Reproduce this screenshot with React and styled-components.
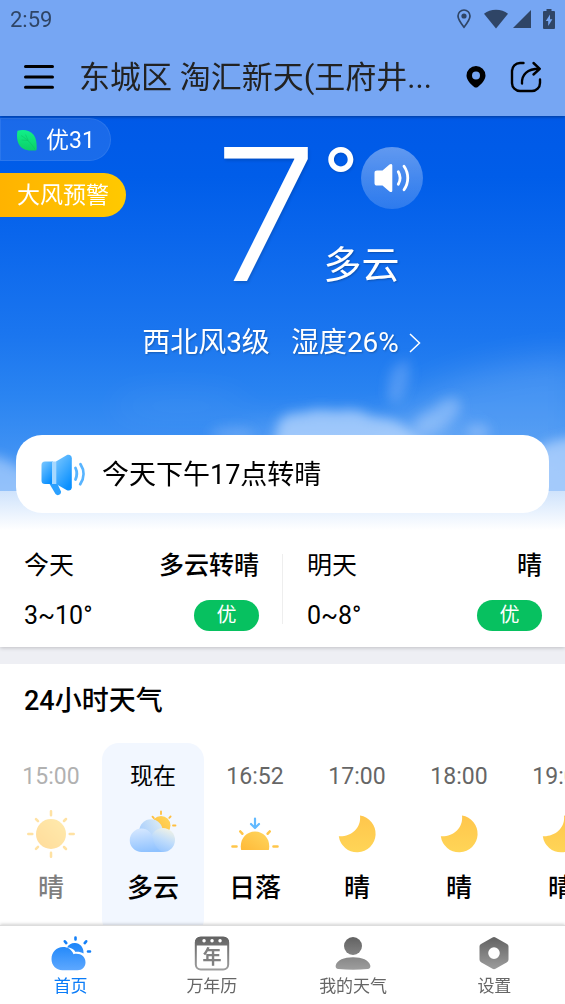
import React, { useState } from 'react'
import styled, { createGlobalStyle } from 'styled-components'

const GlobalStyle = createGlobalStyle`
  * {
    box-sizing: border-box;
  }
  body {
    margin: 0;
    background: #eeeff4;
    color: #000000;
    font-family: Roboto, "Noto Sans CJK SC", sans-serif;
  }
  button {
    border: none;
    padding: 0;
    background: none;
    color: inherit;
    font: inherit;
    cursor: pointer;
  }
  h1, h2, p, ul {
    margin: 0;
    padding: 0;
    font-weight: 400;
  }
  ul {
    list-style: none;
  }
  svg {
    display: block;
    flex-shrink: 0;
  }
`;

const Page = styled.div`
  display: flex;
  flex-direction: column;
  height: 100vh;
`;

const Header = styled.header`
  position: relative;
  z-index: 1;
  background: #76a6f3;
  box-shadow: 0 1px 3px rgba(0, 0, 0, 0.35);
`;

const StatusBar = styled.div`
  display: flex;
  align-items: center;
  justify-content: space-between;
  height: 38px;
  padding: 0 10px;
  color: #2f4566;
  font-size: 22px;
`;

const StatusIcons = styled.div`
  display: flex;
  align-items: center;
`;

const NetworkIcons = styled.div`
  display: flex;
  align-items: center;
  gap: 5px;
  margin: 0 12px 0 13px;
`;

const TitleBar = styled.div`
  display: flex;
  align-items: center;
  height: 78px;
  padding: 0 23px 0 22px;
`;

const IconButton = styled.button`
  display: flex;
  align-items: center;
  justify-content: center;
  flex-shrink: 0;
  width: ${props => props.$width || 32}px;
  height: 40px;
`;

const CityName = styled.h1`
  flex: 1;
  min-width: 0;
  margin: 0 17px 0 25px;
  padding-top: 2px;
  overflow: hidden;
  white-space: nowrap;
  color: #222222;
  font-size: 31px;
  line-height: 40px;
`;

const HeaderActions = styled.div`
  display: flex;
  align-items: center;
  gap: 24px;
`;

const Content = styled.main`
  flex: 1;
  min-height: 0;
  overflow-y: auto;
  scrollbar-width: none;
`;

const Hero = styled.section`
  position: relative;
  isolation: isolate;
  padding-bottom: 17px;
  background: linear-gradient(
    180deg,
    #0059e7 0,
    #005de9 60px,
    #0a66ec 120px,
    #1b76ef 220px,
    #2a84f1 280px,
    #3d90f3 330px,
    #58a0f5 375px,
    #cfe3fc 375px,
    #ffffff 414px
  );
  color: #ffffff;
`;

const Clouds = styled.svg`
  position: absolute;
  z-index: -1;
  top: 0;
  left: 0;
  width: 100%;
  height: 375px;
`;

const Summary = styled.div`
  display: grid;
  grid-template-columns: 8fr auto 9fr;
  align-items: start;
`;

const Badges = styled.div`
  display: flex;
  flex-direction: column;
  align-items: flex-start;
  gap: 12px;
  padding-top: 2px;
`;

const Badge = styled.button`
  display: flex;
  align-items: center;
  gap: 8px;
  height: ${props => props.$warning ? 44 : 43}px;
  padding: 2px ${props => props.$warning ? 17 : 16}px 0;
  border-radius: 0 22px 22px 0;
  background: ${props => props.$warning ? 'linear-gradient(90deg, #ffb300, #ffc900)' : 'rgba(255, 255, 255, 0.1)'};
  box-shadow: ${props => props.$warning ? 'none' : 'inset 0 0 0 1px rgba(255, 255, 255, 0.08)'};
  font-size: 23px;
  line-height: 32px;
  white-space: nowrap;
`;

const Temperature = styled.div`
  padding: 29px 6px 0 0;
  font-family: Inter, sans-serif;
  font-size: 184px;
  font-weight: 300;
  line-height: 138px;
  text-shadow: 1px 2px 3px rgba(0, 0, 0, 0.15);
`;

const Aside = styled.div`
  padding-top: 31px;
`;

const AsideTop = styled.div`
  display: flex;
  height: 62px;
`;

const Degree = styled.span`
  width: 37px;
  font-family: Inter, sans-serif;
  font-size: 76px;
  font-weight: 400;
  line-height: 56px;
  text-shadow: 1px 1px 3px rgba(0, 0, 0, 0.15);
`;

const VoiceButton = styled.button`
  display: flex;
  align-items: center;
  justify-content: center;
  width: 62px;
  height: 62px;
  border-radius: 50%;
  background: linear-gradient(180deg, rgba(255, 255, 255, 0.38), rgba(255, 255, 255, 0.16));
`;

const Condition = styled.p`
  padding-top: 32px;
  font-size: 38px;
  line-height: 48px;
  text-shadow: 1px 1px 2px rgba(0, 0, 0, 0.25);
`;

const WindLink = styled.a`
  display: flex;
  align-items: center;
  justify-content: center;
  gap: 21px;
  margin: 34px 2px 0 0;
  color: #ffffff;
  font-size: 28px;
  line-height: 40px;
  text-decoration: none;
  text-shadow: 1px 1px 2px rgba(0, 0, 0, 0.25);
`;

const Humidity = styled.span`
  display: flex;
  align-items: center;
  gap: 10px;
`;

const Notice = styled.div`
  display: flex;
  align-items: center;
  gap: 16px;
  height: 78px;
  margin: 72px 16px 0;
  padding: 2px 24px 0;
  border-radius: 26px;
  background: #ffffff;
  color: #000000;
  font-size: 27px;
  line-height: 36px;
`;

const Forecast = styled.section`
  display: flex;
  padding: 20px 0 16px;
  background: #ffffff;
  box-shadow: 0 1px 4px rgba(0, 0, 0, 0.2);
`;

const Day = styled.div`
  flex: 1;
  padding: 0 23px 0 24px;
  font-size: 25px;
  line-height: 31px;
`;

const Divider = styled.div`
  width: 1px;
  margin: 4px 0 7px;
  background: #eeeeee;
`;

const DayRow = styled.div`
  display: flex;
  align-items: center;
  justify-content: space-between;
  height: 31px;

  & + & {
    margin-top: 19px;
  }
`;

const Strong = styled.span`
  font-weight: 500;
`;

const Quality = styled.span`
  width: 65px;
  border-radius: 16px;
  background: #07c160;
  color: #ffffff;
  font-size: 20px;
  line-height: 31px;
  text-align: center;
`;

const Hourly = styled.section`
  margin-top: 17px;
  padding-top: 22px;
  background: #ffffff;
`;

const HourlyTitle = styled.h2`
  padding: 0 24px;
  font-size: 27px;
  font-weight: 500;
  line-height: 30px;
`;

const HourList = styled.ul`
  display: flex;
  margin-top: 27px;
  overflow-x: auto;
  scrollbar-width: none;
`;

const Hour = styled.li`
  display: flex;
  flex-direction: column;
  align-items: center;
  flex: 0 0 102px;
  padding: 18px 0 32px;
  border-radius: 17px;
  background: ${props => props.$current ? '#f2f7ff' : 'transparent'};
  opacity: ${props => props.$past ? 0.5 : 1};
`;

const HourTime = styled.span`
  margin-bottom: 17px;
  color: ${props => props.$current ? '#000000' : '#666666'};
  font-size: 23px;
  line-height: 32px;
`;

const HourCondition = styled.span`
  margin-top: 14px;
  font-size: 26px;
  font-weight: 500;
  line-height: 32px;
`;

const TabBar = styled.nav`
  position: relative;
  display: flex;
  border-top: 1px solid #dddddd;
  background: #ffffff;
  box-shadow: 0 -1px 3px rgba(0, 0, 0, 0.18);
`;

const Tab = styled.button`
  display: flex;
  flex: 1;
  flex-direction: column;
  align-items: center;
  gap: 4px;
  padding: 10px 0 8px;
  color: ${props => props.$active ? '#0a7cf8' : '#666666'};
  font-size: 17px;
  line-height: 20px;
`;

const LocationStatusIcon = () => (
  <svg width="14" height="20" viewBox="0 0 14 20" fill="none" stroke="currentColor" strokeWidth="1.7">
    <path d="M7 18.2C3.4 13.6 1 10.2 1 7a6 6 0 0 1 12 0c0 3.2-2.4 6.6-6 11.2z" />
    <circle cx="7" cy="7" r="2.6" fill="currentColor" stroke="none" />
  </svg>
)

const WifiIcon = () => (
  <svg width="24" height="20" viewBox="0 0 24 20" fill="currentColor">
    <path d="M12 19.5L0 4.7C3.3 2 7.4.7 12 .7S20.7 2 24 4.7z" />
  </svg>
)

const SignalIcon = () => (
  <svg width="18" height="18" viewBox="0 0 18 18" fill="currentColor">
    <path d="M18 0v18H0z" />
  </svg>
)

const BatteryIcon = () => (
  <svg width="12" height="20" viewBox="0 0 12 20">
    <path d="M3.5 0h5v2H11a1 1 0 0 1 1 1v16a1 1 0 0 1-1 1H1a1 1 0 0 1-1-1V3a1 1 0 0 1 1-1h2.5z" fill="currentColor" />
    <path d="M7 5.5L2.8 12h2.4v5L9.4 10.2H7z" fill="#76a6f3" />
  </svg>
)

const MenuIcon = () => (
  <svg width="32" height="26" viewBox="0 0 32 26" fill="none" stroke="#000000" strokeWidth="3" strokeLinecap="round">
    <path d="M3.5 2.5h27M3.5 13h27M3.5 23.3h27" />
  </svg>
)

const PinIcon = () => (
  <svg width="20" height="22" viewBox="0 0 20 22">
    <path
      fillRule="evenodd"
      d="M10 0a9.5 9.5 0 0 1 9.500 9.400c0 4.300-3.600 8-7.400 11.300a3.200 3.200 0 0 1-4.200 0C4.100 17.400.5 13.700.5 9.400A9.500 9.500 0 0 1 10 0zm0 5.500a4 4 0 1 0 0 8 4 4 0 0 0 0-8z"
    />
  </svg>
)

const ShareIcon = () => (
  <svg width="32" height="32" viewBox="0 0 32 32" fill="none" stroke="#000000" strokeWidth="2.4" strokeLinecap="round" strokeLinejoin="round">
    <path d="M13.5 2H10a8 8 0 0 0-8 8v12a8 8 0 0 0 8 8h12a8 8 0 0 0 8-8v-3.5" />
    <path d="M12 22.5C11.5 13.5 17 7.800 29.500 7.800M23.500 2l6.300 5.800-6.300 5.700" />
  </svg>
)

const LeafIcon = () => (
  <svg width="22" height="22" viewBox="0 0 22 22">
    <defs>
      <linearGradient id="leaf" x1="0" y1="0" x2="0" y2="1">
        <stop offset="0" stopColor="#10f08a" />
        <stop offset="1" stopColor="#0ccf66" />
      </linearGradient>
    </defs>
    <path d="M1.500.7C7.500-.7 14 0 17.800 5c2.600 3.500 3 9 2.900 13.500 0 1.400-.5 2-1.700 2C13.500 20.800 7.500 20.500 4 16 .8 11.800.5 5.500 1.500.7z" fill="url(#leaf)" />
    <path d="M5 5.500c5 3 10 7 14 14M9.500 4.500l2.500 5.500M5.500 10l7 .5" fill="none" stroke="#0bb85c" strokeWidth="0.8" opacity="0.5" />
  </svg>
)

const SpeakerIcon = () => (
  <svg width="36" height="30" viewBox="0 0 36 30" fill="none" stroke="#ffffff" strokeWidth="2.8" strokeLinecap="round">
    <path d="M3 7.500h5.500L15.500 1.600c1.300-1 2.800-.6 2.800 1v24.800c0 1.600-1.500 2-2.800 1L8.500 22.500H3c-1.500 0-2.500-.8-2.500-2.300V9.800c0-1.500 1-2.300 2.500-2.300z" fill="#ffffff" stroke="none" />
    <path d="M24.300 8.700c2.300 4 2.300 8.600 0 12.600M30 3.200c5 7.200 5 16.400 0 23.600" />
  </svg>
)

const ChevronIcon = () => (
  <svg width="12" height="20" viewBox="0 0 12 20" fill="none" stroke="#ffffff" strokeWidth="1.5">
    <path d="M1 1l9.500 9L1 19" />
  </svg>
)

const MegaphoneIcon = () => (
  <svg width="46" height="42" viewBox="0 0 46 42">
    <defs>
      <linearGradient id="horn" x1="0" y1="0" x2="0.6" y2="1">
        <stop offset="0" stopColor="#7cc8ff" />
        <stop offset="1" stopColor="#0a90ff" />
      </linearGradient>
    </defs>
    <path d="M9 29h8l4 8.500c.6 3-3.500 5-5.500 2.500z" fill="#2ba0ff" />
    <path d="M5 7.500h8V30H5a3.500 3.500 0 0 1-3.500-3.500V11A3.500 3.500 0 0 1 5 7.500z" fill="url(#horn)" />
    <path d="M16 7.500L26.500 1.300c2.700-1.300 5.300.2 5.300 3v29c0 2.800-2.600 4-5.300 2.700L16 30z" fill="url(#horn)" />
    <path d="M12 7.500h4.300V30H12z" fill="#a6d8ff" />
    <path d="M35.500 14c1.700 3.500 1.700 7.500 0 11.500M40.500 10.200c4 6 4 13.600-.3 20" fill="none" stroke="#58b4ff" strokeWidth="2.8" strokeLinecap="round" />
  </svg>
)

const Gradients = () => (
  <defs>
    <linearGradient id="sun" x1="0" y1="1" x2="1" y2="0">
      <stop offset="0" stopColor="#ffb938" />
      <stop offset="1" stopColor="#ffd75e" />
    </linearGradient>
    <linearGradient id="moon" x1="0" y1="0" x2="0" y2="1">
      <stop offset="0" stopColor="#ffc64c" />
      <stop offset="1" stopColor="#ffd557" />
    </linearGradient>
    <linearGradient id="cloudBack" x1="0" y1="0.8" x2="1" y2="0.2">
      <stop offset="0" stopColor="#a0caff" />
      <stop offset="1" stopColor="#dcebf4" />
    </linearGradient>
    <linearGradient id="cloudRight" x1="0.3" y1="1" x2="0.7" y2="0">
      <stop offset="0" stopColor="#94c4ff" />
      <stop offset="0.5" stopColor="#bfdcfb" />
      <stop offset="1" stopColor="#f2f3e6" />
    </linearGradient>
    <linearGradient id="cloudFront" x1="0.3" y1="0" x2="0.5" y2="1">
      <stop offset="0" stopColor="#d5e7ff" />
      <stop offset="1" stopColor="#8fc2ff" />
    </linearGradient>
  </defs>
)

const SunIcon = () => (
  <svg width="48" height="48" viewBox="0 0 48 48">
    <Gradients />
    <circle cx="24" cy="24" r="15" fill="url(#sun)" />
    <path
      d="M24 1.300v4M24 42.700v4M1.300 24h4M42.700 24h4M9 9.200l2 2M37 37l2 2M9 38.800l2-2M37 11l2-2"
      stroke="#ffc64a"
      strokeWidth="2.5"
      strokeLinecap="round"
    />
  </svg>
)

const CloudyIcon = () => (
  <svg width="48" height="48" viewBox="0 0 48 48">
    <circle cx="32" cy="15.500" r="9.500" fill="url(#sun)" />
    <path d="M32 1.500v2.500M44 15.500h2.500M23.500 6.700l1.300 1.300M40.300 7.800l1.300-1.300" stroke="#ffbf40" strokeWidth="1.8" strokeLinecap="round" />
    <circle cx="22" cy="21" r="11.700" fill="url(#cloudBack)" />
    <circle cx="34" cy="30" r="12" fill="url(#cloudRight)" />
    <path d="M12.500 18.500c6.500 0 10.300 4.500 11.300 9.500 1.500 7.500 5 12.300 11 14H12.500a11.700 11.700 0 0 1 0-23.500z" fill="url(#cloudFront)" />
  </svg>
)

const SunsetIcon = () => (
  <svg width="48" height="48" viewBox="0 0 48 48">
    <path d="M10.200 40C8 30 14.500 21.500 24 21.500S40 30 37.800 40z" fill="url(#sun)" />
    <path d="M1.500 36.500h4M42.500 36.500h4M9.300 21.500l2 2.200M38.700 21.500l-2 2.200" stroke="#ffc64a" strokeWidth="2.6" strokeLinecap="round" />
    <path d="M24 8.500v9M20 14l4 4 4-4" fill="none" stroke="#62baff" strokeWidth="2.2" strokeLinecap="round" strokeLinejoin="round" />
  </svg>
)

const MoonIcon = () => (
  <svg width="48" height="48" viewBox="0 0 48 48">
    <path d="M27 5.500a18.500 18.500 0 1 1-21.200 20.800C18 27 28.500 18 27 5.500z" fill="url(#moon)" />
  </svg>
)

const TabGradients = () => (
  <defs>
    <linearGradient id="tabBlue" x1="0" y1="0" x2="0" y2="36" gradientUnits="userSpaceOnUse">
      <stop offset="0" stopColor="#0a7cf8" />
      <stop offset="1" stopColor="#62aaff" />
    </linearGradient>
    <linearGradient id="tabGray" x1="0" y1="0" x2="0" y2="36" gradientUnits="userSpaceOnUse">
      <stop offset="0" stopColor="#606060" />
      <stop offset="1" stopColor="#a2a2a2" />
    </linearGradient>
  </defs>
)

const HomeIcon = () => (
  <svg width="42" height="36" viewBox="0 0 42 36">
    <TabGradients />
    <path d="M17 11.500c1.800-3 4.500-4.700 8-4.500 5 .2 8.500 4.300 8.500 9v1.600c-2.300-1.500-5-2-8-1.700-1.600-2.700-4.500-4.400-8.500-4.400z" fill="url(#tabBlue)" />
    <path d="M13 11c5 0 8.800 2.600 10.500 7.200 6.500-1.500 12 2.300 12 8 0 4.500-3.200 8-8 8H12.500C6 34.200 1.500 29.300 1.500 23c0-6.800 5-12 11.500-12z" fill="url(#tabBlue)" />
    <path d="M25.500 1.500v2M14.800 5.300l1.500 1.800M36.200 5.300l-1.500 1.800M38 15.500h2" stroke="#1480f8" strokeWidth="2.6" strokeLinecap="round" />
  </svg>
)

const CalendarIcon = () => (
  <svg width="36" height="36" viewBox="0 0 36 36">
    <rect x="1.800" y="1.500" width="32.400" height="32" rx="5" fill="none" stroke="url(#tabGray)" strokeWidth="2" />
    <path d="M1 9.500V6a5 5 0 0 1 5-5h24a5 5 0 0 1 5 5v3.500z" fill="url(#tabGray)" />
    <path d="M10 4.700h.1M18 4.700h.1M26 4.700h.1" stroke="#ffffff" strokeWidth="3.4" strokeLinecap="round" />
    <text x="18" y="28" fill="#808080" fontFamily="Noto Sans CJK SC, sans-serif" fontSize="19" fontWeight="700" textAnchor="middle">年</text>
  </svg>
)

const PersonIcon = () => (
  <svg width="36" height="36" viewBox="0 0 36 36" fill="url(#tabGray)">
    <circle cx="18" cy="10" r="9" />
    <path d="M.7 29.500C2 24 9 21.200 18 21.200S34 24 35.300 29.500c.4 2-.7 3.500-2.700 3.500-9.700.9-19.500.9-29.200 0-2 0-3.100-1.500-2.700-3.500z" />
  </svg>
)

const SettingsIcon = () => (
  <svg width="36" height="36" viewBox="0 0 36 36">
    <path
      fill="url(#tabGray)"
      fillRule="evenodd"
      d="M16.500 1.500a3 3 0 0 1 3 0l11.500 6.500a3 3 0 0 1 1.500 2.600v13a3 3 0 0 1-1.500 2.600L19.500 32.700a3 3 0 0 1-3 0L5 26.200a3 3 0 0 1-1.500-2.600v-13A3 3 0 0 1 5 8zM18 11.300a5.800 5.800 0 1 0 0 11.600 5.800 5.800 0 0 0 0-11.600z"
    />
  </svg>
)

const days = [
  { name: '今天', weather: '多云转晴', range: '3~10°', quality: '优' },
  { name: '明天', weather: '晴', range: '0~8°', quality: '优' },
]

const hours = [
  { time: '15:00', condition: '晴', icon: SunIcon, past: true },
  { time: '现在', condition: '多云', icon: CloudyIcon, current: true },
  { time: '16:52', condition: '日落', icon: SunsetIcon },
  { time: '17:00', condition: '晴', icon: MoonIcon },
  { time: '18:00', condition: '晴', icon: MoonIcon },
  { time: '19:00', condition: '晴', icon: MoonIcon },
]

const tabs = [
  { id: 'home', label: '首页', icon: HomeIcon },
  { id: 'calendar', label: '万年历', icon: CalendarIcon },
  { id: 'mine', label: '我的天气', icon: PersonIcon },
  { id: 'settings', label: '设置', icon: SettingsIcon },
]

const SkyClouds = () => (
  <Clouds viewBox="0 0 565 375" preserveAspectRatio="none" aria-hidden="true">
    <defs>
      <filter id="soft" x="-30%" y="-60%" width="160%" height="220%">
        <feGaussianBlur stdDeviation="6" />
      </filter>
      <filter id="haze" x="-50%" y="-80%" width="200%" height="260%">
        <feGaussianBlur stdDeviation="16" />
      </filter>
    </defs>
    <g fill="#ffffff" filter="url(#haze)">
      <path d="M400 290Q470 245 580 240V375H400z" opacity="0.14" />
      <ellipse cx="180" cy="290" rx="70" ry="14" opacity="0.06" />
      <ellipse cx="350" cy="325" rx="120" ry="20" opacity="0.18" />
    </g>
    <g fill="#cfe3ff" filter="url(#soft)">
      <path d="M272 345l6-38q8-12 24-10 12-6 36-2 20-4 34 6 24 0 38 14 14 10 22 30z" opacity="0.62" />
      <path d="M388 284q-2-24 8-36 8 2 10-8 6 12 2 28-4 12-10 20z" opacity="0.24" />
      <path d="M412 310q10-14 22-18 8-12 24-10 6 12-4 20-10 14-32 18z" opacity="0.36" />
      <ellipse cx="478" cy="316" rx="12" ry="8" opacity="0.34" />
      <ellipse cx="232" cy="318" rx="22" ry="7" opacity="0.24" />
      <path d="M-20 340q22-4 50 20v30H-20z" opacity="0.5" />
      <path d="M530 338q18-16 55-18v70h-55z" opacity="0.6" />
    </g>
  </Clouds>
)

const DaySummary = ({ day }) => (
  <Day>
    <DayRow>
      <span>{day.name}</span>
      <Strong>{day.weather}</Strong>
    </DayRow>
    <DayRow>
      <span>{day.range}</span>
      <Quality>{day.quality}</Quality>
    </DayRow>
  </Day>
)

const App = () => {
  const [activeTab, setActiveTab] = useState('home')

  return (
    <>
      <GlobalStyle />
      <Page>
        <Header>
          <StatusBar>
            <span>2:59</span>
            <StatusIcons>
              <LocationStatusIcon />
              <NetworkIcons>
                <WifiIcon />
                <SignalIcon />
              </NetworkIcons>
              <BatteryIcon />
            </StatusIcons>
          </StatusBar>
          <TitleBar>
            <IconButton aria-label="菜单">
              <MenuIcon />
            </IconButton>
            <CityName>东城区 淘汇新天(王府井...</CityName>
            <HeaderActions>
              <IconButton $width={20} aria-label="定位">
                <PinIcon />
              </IconButton>
              <IconButton $width={32} aria-label="分享">
                <ShareIcon />
              </IconButton>
            </HeaderActions>
          </TitleBar>
        </Header>

        <Content>
          <Hero>
            <SkyClouds />
            <Summary>
              <Badges>
                <Badge>
                  <LeafIcon />
                  优31
                </Badge>
                <Badge $warning>大风预警</Badge>
              </Badges>
              <Temperature>7</Temperature>
              <Aside>
                <AsideTop>
                  <Degree>°</Degree>
                  <VoiceButton aria-label="语音播报">
                    <SpeakerIcon />
                  </VoiceButton>
                </AsideTop>
                <Condition>多云</Condition>
              </Aside>
            </Summary>
            <WindLink href="#detail">
              <span>西北风3级</span>
              <Humidity>
                湿度26%
                <ChevronIcon />
              </Humidity>
            </WindLink>
            <Notice>
              <MegaphoneIcon />
              <p>今天下午17点转晴</p>
            </Notice>
          </Hero>

          <Forecast>
            <DaySummary day={days[0]} />
            <Divider />
            <DaySummary day={days[1]} />
          </Forecast>

          <Hourly>
            <HourlyTitle>24小时天气</HourlyTitle>
            <HourList>
              {hours.map(({ time, condition, icon: HourIcon, past, current }) => (
                <Hour key={time} $past={past} $current={current}>
                  <HourTime $current={current}>{time}</HourTime>
                  <HourIcon />
                  <HourCondition>{condition}</HourCondition>
                </Hour>
              ))}
            </HourList>
          </Hourly>
        </Content>

        <TabBar>
          {tabs.map(({ id, label, icon: TabIcon }) => (
            <Tab key={id} $active={id === activeTab} onClick={() => setActiveTab(id)}>
              <TabIcon />
              <span>{label}</span>
            </Tab>
          ))}
        </TabBar>
      </Page>
    </>
  )
}

export default App
